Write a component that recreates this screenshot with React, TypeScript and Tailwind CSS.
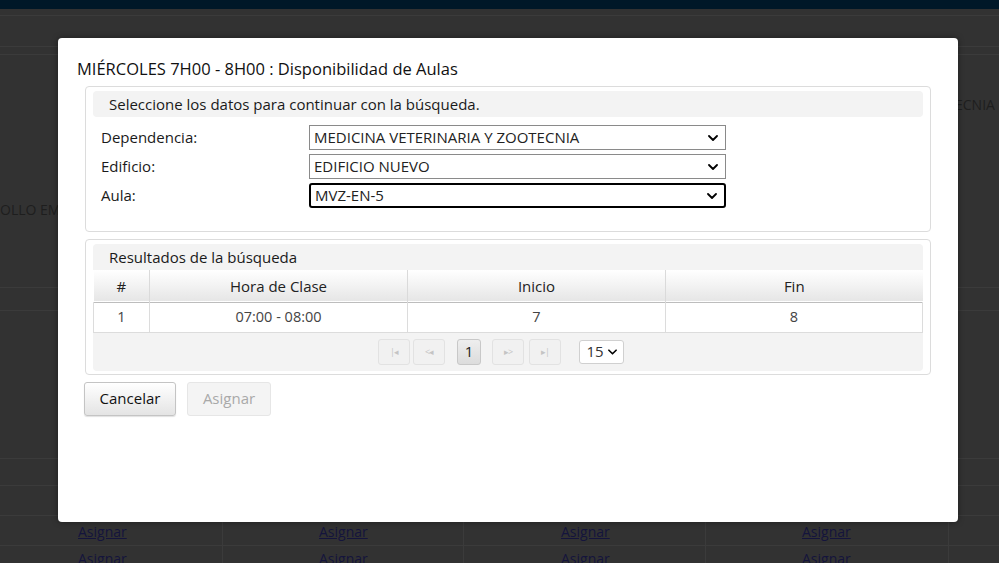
import React from 'react';

const font = { fontFamily: '"Open Sans", "Noto Sans", sans-serif' };

const Chevron = ({ className = '' }: { className?: string }) => (
  <svg viewBox="0 0 10 6" className={className} fill="none" stroke="currentColor" strokeWidth={1.8} strokeLinecap="round" strokeLinejoin="round">
    <path d="M1 1l4 4 4-4" />
  </svg>
);

interface SelectProps {
  value: string;
  focused?: boolean;
}

const FakeSelect: React.FC<SelectProps> = ({ value, focused }) => (
  <div
    className={`flex h-[25px] w-[417px] items-center justify-between bg-white pl-[4px] pr-[7px] text-[15px] text-[#222] ${
      focused ? 'rounded-[3px] border-2 border-black pl-[3px] pr-[6px]' : 'border border-[#8a8a8a]'
    }`}
  >
    <span>{value}</span>
    <Chevron className="h-[6px] w-[10px] text-black" />
  </div>
);

const PagerBtn = ({ children }: { children: React.ReactNode }) => (
  <div className="flex h-[26px] w-[32px] items-center justify-center rounded-[3px] border border-[#e2e2e2] bg-[#f1f1f1] text-[9px] tracking-[-1px] text-[#c4c4c4]">
    {children}
  </div>
);

const BgRow = ({ top }: { top: number }) => <div style={{ top }} className="absolute left-0 right-0 h-px bg-[#3b3b3b]" />;

export default function App() {
  return (
    <div className="relative h-[563px] w-[999px] overflow-hidden bg-[#323232]" style={font}>
      {/* dimmed page behind */}
      <div className="h-[9px] bg-[#001828]" />
      <BgRow top={15} />
      <BgRow top={46} />
      <BgRow top={54} />
      <BgRow top={287} />
      <BgRow top={310} />
      <BgRow top={458} />
      <BgRow top={485} />
      <BgRow top={515} />
      <BgRow top={545} />
      <div className="absolute left-0 top-[199px] text-[14px] text-[#1e1e1e]">OLLO EM</div>
      <div className="absolute left-[955px] top-[94px] text-[14px] text-[#1e1e1e]">ECNIA</div>
      {[222, 463, 705, 948].map((x) => (
        <div key={x} style={{ left: x }} className="absolute top-[515px] h-[48px] w-px bg-[#3b3b3b]" />
      ))}
      {[78, 319, 561, 802].map((x) => (
        <React.Fragment key={x}>
          <div style={{ left: x }} className="absolute top-[521px] text-[14px] text-[#14143c] underline">Asignar</div>
          <div style={{ left: x }} className="absolute top-[548px] text-[14px] text-[#14143c] underline">Asignar</div>
        </React.Fragment>
      ))}

      {/* modal */}
      <div className="absolute left-[58px] top-[38px] h-[484px] w-[900px] rounded-[4px] bg-white px-[27px] pt-[20px] shadow-[0_0_6px_rgba(0,0,0,0.4)]">
        <h1 className="ml-[-8px] text-[16.5px] leading-[22px] text-[#111]">MIÉRCOLES 7H00 - 8H00 : Disponibilidad de Aulas</h1>

        <div className="mt-[6px] h-[146px] rounded-[4px] border border-[#dcdcdc] px-[7px] pt-[4px]">
          <div className="flex h-[26px] items-center rounded-[4px] bg-[#f3f3f3] pl-[16px] text-[15px] text-[#1a1a1a]">
            Seleccione los datos para continuar con la búsqueda.
          </div>
          <div className="mt-[8px] flex flex-col gap-[4px] pl-[8px] text-[15px] text-[#1a1a1a]">
            {[
              ['Dependencia:', 'MEDICINA VETERINARIA Y ZOOTECNIA', false],
              ['Edificio:', 'EDIFICIO NUEVO', false],
              ['Aula:', 'MVZ-EN-5', true],
            ].map(([label, value, focused]) => (
              <div key={label as string} className="flex items-start">
                <span className="w-[208px] leading-[24px]">{label}</span>
                <FakeSelect value={value as string} focused={focused as boolean} />
              </div>
            ))}
          </div>
        </div>

        <div className="mt-[7px] rounded-[4px] border border-[#dcdcdc] px-[7px] pb-[3px] pt-[4px]">
          <div className="flex h-[26px] items-center rounded-t-[4px] bg-[#f3f3f3] pl-[16px] text-[15px] text-[#1a1a1a]">
            Resultados de la búsqueda
          </div>
          <table className="w-full border-collapse text-[14.5px] text-[#222]">
            <thead>
              <tr className="h-[32px] bg-gradient-to-b from-white to-[#e6e6e6] border-b border-[#bdbdbd] text-[15px]">
                <th className="w-[56px] border-r border-[#dadada] font-normal">#</th>
                <th className="w-[258px] border-r border-[#dadada] font-normal">Hora de Clase</th>
                <th className="w-[258px] border-r border-[#dadada] font-normal">Inicio</th>
                <th className="font-normal">Fin</th>
              </tr>
            </thead>
            <tbody>
              <tr className="h-[30px] border-b border-[#dcdcdc] text-[#444]">
                <td className="border-l border-r border-[#dcdcdc] text-center">1</td>
                <td className="border-r border-[#dcdcdc] text-center">07:00 - 08:00</td>
                <td className="border-r border-[#dcdcdc] text-center">7</td>
                <td className="border-r border-[#dcdcdc] text-center">8</td>
              </tr>
            </tbody>
          </table>
          <div className="flex h-[38px] items-center justify-center rounded-b-[4px] bg-[#f3f3f3] pr-[14px]">
            <PagerBtn>|◂</PagerBtn>
            <div className="w-[3px]" />
            <PagerBtn>&lt;◂</PagerBtn>
            <div className="ml-[12px] flex h-[26px] w-[24px] items-center justify-center rounded-[3px] border border-[#c8c8c8] bg-gradient-to-b from-[#eeeeee] to-[#dcdcdc] text-[15px] text-[#222]">
              1
            </div>
            <div className="w-[11px]" />
            <PagerBtn>▸&gt;</PagerBtn>
            <div className="w-[5px]" />
            <PagerBtn>▸|</PagerBtn>
            <div className="ml-[18px] flex h-[24px] w-[45px] items-center justify-center gap-[4px] rounded-[3px] border border-[#d0d0d0] bg-white text-[15px] text-[#333]">
              15
              <Chevron className="h-[6px] w-[9px] text-black" />
            </div>
          </div>
        </div>

        <div className="mt-[7px] ml-[-1px] flex gap-[11px]">
          <button className="h-[34px] w-[92px] rounded-[3px] border border-[#c4c4c4] bg-gradient-to-b from-white to-[#e4e4e4] text-[15px] text-[#111] shadow-[0_1px_1px_rgba(0,0,0,0.12)]">
            Cancelar
          </button>
          <button className="h-[34px] w-[84px] rounded-[3px] border border-[#e6e6e6] bg-[#f4f4f4] text-[15px] text-[#a9a9a9]">
            Asignar
          </button>
        </div>
      </div>
    </div>
  );
}
